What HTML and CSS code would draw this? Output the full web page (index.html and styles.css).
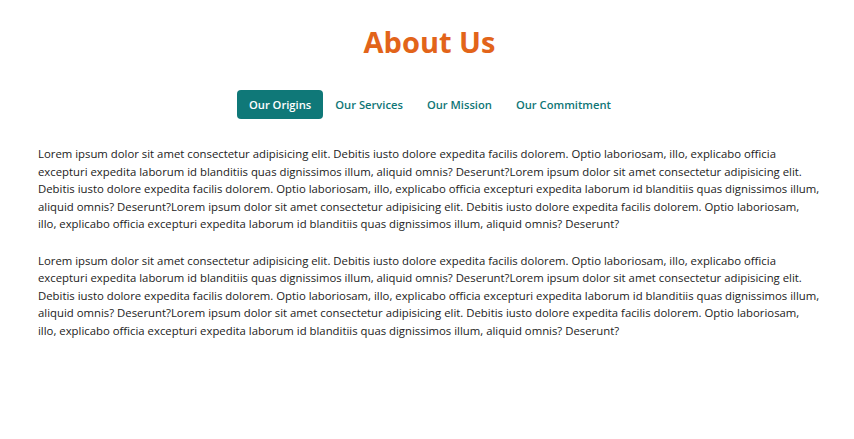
FILE: index.html
```html
<!DOCTYPE html>
<html lang="en">
<head>
<meta charset="utf-8">
<title>About Us</title>
<link rel="stylesheet" href="styles.css">
</head>
<body>
<main class="about">
  <h1 class="title">About Us</h1>
  <nav class="tabs">
    <button class="tab active">Our Origins</button>
    <button class="tab">Our Services</button>
    <button class="tab">Our Mission</button>
    <button class="tab">Our Commitment</button>
  </nav>
  <section class="content">
    <p>Lorem ipsum dolor sit amet consectetur adipisicing elit. Debitis iusto dolore expedita facilis dolorem. Optio laboriosam, illo, explicabo officia excepturi expedita laborum id blanditiis quas dignissimos illum, aliquid omnis? Deserunt?Lorem ipsum dolor sit amet consectetur adipisicing elit. Debitis iusto dolore expedita facilis dolorem. Optio laboriosam, illo, explicabo officia excepturi expedita laborum id blanditiis quas dignissimos illum, aliquid omnis? Deserunt?Lorem ipsum dolor sit amet consectetur adipisicing elit. Debitis iusto dolore expedita facilis dolorem. Optio laboriosam, illo, explicabo officia excepturi expedita laborum id blanditiis quas dignissimos illum, aliquid omnis? Deserunt?</p>
    <p>Lorem ipsum dolor sit amet consectetur adipisicing elit. Debitis iusto dolore expedita facilis dolorem. Optio laboriosam, illo, explicabo officia excepturi expedita laborum id blanditiis quas dignissimos illum, aliquid omnis? Deserunt?Lorem ipsum dolor sit amet consectetur adipisicing elit. Debitis iusto dolore expedita facilis dolorem. Optio laboriosam, illo, explicabo officia excepturi expedita laborum id blanditiis quas dignissimos illum, aliquid omnis? Deserunt?Lorem ipsum dolor sit amet consectetur adipisicing elit. Debitis iusto dolore expedita facilis dolorem. Optio laboriosam, illo, explicabo officia excepturi expedita laborum id blanditiis quas dignissimos illum, aliquid omnis? Deserunt?</p>
  </section>
</main>
</body>
</html>
```
FILE: styles.css
```css
* { box-sizing: border-box; }
body {
  margin: 0;
  background: #fff;
  font-family: "Open Sans", "Noto Sans", sans-serif;
  color: #222;
}
.about {
  padding: 22px 0 24px;
}
.title {
  margin: 0;
  text-align: center;
  padding-left: 5px;
  color: #e2641a;
  font-size: 29px;
  font-weight: 700;
  line-height: 40px;
}
.tabs {
  display: flex;
  justify-content: center;
  padding-left: 6px;
  margin-top: 28px;
}
.tab {
  font-family: inherit;
  font-size: 11.2px;
  font-weight: 600;
  color: #0f7676;
  background: none;
  border: none;
  border-radius: 4px;
  height: 29px;
  padding: 0 12px;
  cursor: pointer;
}
.tab.active {
  background: #0f7878;
  color: #fff;
}
.content {
  margin-top: 26px;
  padding: 0 34px 0 38px;
  font-size: 11.35px;
  line-height: 17.5px;
}
.content p {
  margin: 0 0 19px;
}
```
